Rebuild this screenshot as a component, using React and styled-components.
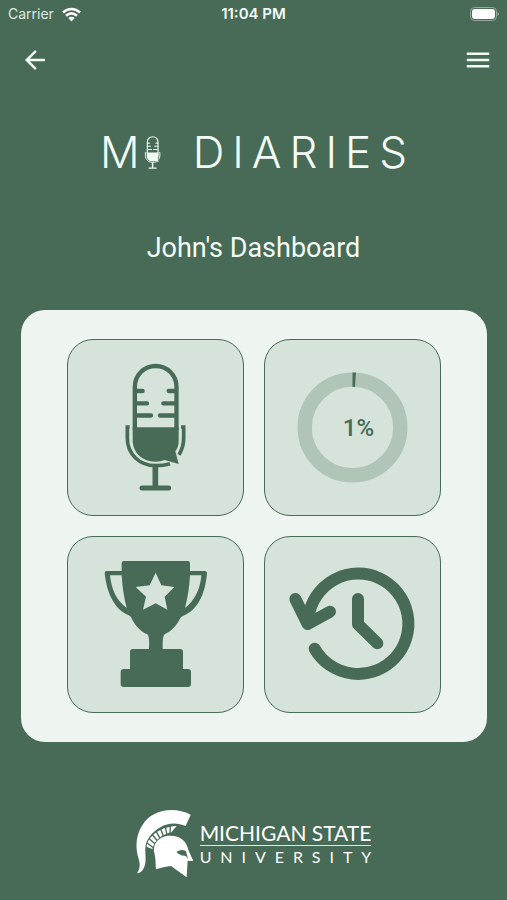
import React from 'react';
import styled, { createGlobalStyle } from 'styled-components';
import { MdArrowBack, MdMenu } from 'react-icons/md';

const GlobalStyle = createGlobalStyle`
  * {
    box-sizing: border-box;
  }
  body {
    margin: 0;
    background: #476b56;
  }
`;

const Page = styled.div`
  min-height: 100vh;
  display: flex;
  flex-direction: column;
  background: #476b56;
  color: #f3fbf6;
  font-family: Roboto, sans-serif;
`;

const StatusBar = styled.div`
  display: grid;
  grid-template-columns: 1fr auto 1fr;
  align-items: center;
  height: 28px;
  padding: 0 8px;
  font-family: Inter, sans-serif;
  font-size: 14px;
  line-height: 20px;
`;

const Carrier = styled.span`
  display: flex;
  align-items: center;
  gap: 8px;
  color: #dfe9e3;
`;

const Clock = styled.time`
  font-size: 15px;
  font-weight: 600;
`;

const Battery = styled.svg`
  justify-self: end;
`;

const NavBar = styled.nav`
  display: flex;
  justify-content: space-between;
  align-items: center;
  height: 64px;
  padding: 0 14px 0 20px;
`;

const IconButton = styled.button`
  display: flex;
  padding: 0;
  border: 0;
  background: none;
  color: inherit;
  font-size: 30px;
  cursor: pointer;
`;

const Brand = styled.h1`
  display: flex;
  justify-content: center;
  align-items: center;
  gap: 4px;
  margin: 32px 0 0;
  font-family: Inter, sans-serif;
  font-size: 44px;
  line-height: 56px;
  font-weight: 300;
`;

/* the negative margin drops the tracking after the last letter */
const BrandWord = styled.span`
  margin-right: -8px;
  padding-left: 28px;
  letter-spacing: 8px;
`;

const Subtitle = styled.h2`
  margin: 53px 0 0;
  text-align: center;
  font-size: 27px;
  line-height: 30px;
  font-weight: 400;
`;

const Panel = styled.main`
  display: grid;
  grid-template-columns: 1fr 1fr;
  gap: 20px;
  margin: 47px 20px 0 21px;
  padding: 29px 46px;
  border-radius: 24px;
  background: #eef4f0;
`;

const Tile = styled.button`
  display: grid;
  place-items: center;
  aspect-ratio: 1;
  padding: 0;
  border: 1px solid #476b56;
  border-radius: 26px;
  background: #d5e3da;
  color: #476b56;
  cursor: pointer;

  svg {
    grid-area: 1 / 1;
    display: block;
    width: 100%;
  }
`;

const Percent = styled.span`
  grid-area: 1 / 1;
  padding-left: 12px;
  font-family: Roboto, sans-serif;
  font-size: 24px;
  line-height: 28px;
  font-weight: 500;
`;

const Footer = styled.footer`
  display: flex;
  justify-content: center;
  align-items: center;
  gap: 6px;
  margin-top: 67px;
  padding-bottom: 20px;
  color: #fff;
  font-family: Lato, sans-serif;
`;

const School = styled.div`
  display: flex;
  flex-direction: column;
`;

const SchoolName = styled.span`
  border-bottom: 1px solid #dfe9e3;
  font-size: 21px;
  line-height: 25px;
`;

const SchoolKind = styled.span`
  display: flex;
  justify-content: space-between;
  padding-top: 1px;
  font-size: 16px;
  line-height: 20px;
`;

function MicShape() {
  return (
    <g fill="none" stroke="currentColor" strokeWidth="13" strokeLinecap="round">
      <path d="M224.500 300V170a62.500 62 0 0 1 125 0v130" strokeLinecap="butt" />
      <path d="M230 183h18M230 220h31M230 256.500h43M345 183h-19M345 220h-35M345 256.500h-45" />
      <path
        d="M218 292h138v42q0 17-10 30l10 38-42-12q-12 5-27 5c-42 0-69-29-69-65z"
        fill="currentColor"
        stroke="none"
      />
      <path d="M209 291h-7v34c0 48 37 82 85 82q24 0 43-6" strokeWidth="11" strokeLinecap="butt" />
      <path d="M363 291h8v34q0 27-14 49" strokeWidth="11" strokeLinecap="butt" />
      <path d="M286 406v65" strokeWidth="17" strokeLinecap="butt" />
      <path d="M246 474h80" strokeWidth="15" />
    </g>
  );
}

function ProgressRing({ value }) {
  const r = 143.5;
  const length = 2 * Math.PI * r;
  return (
    <svg viewBox="27 30 525 525" aria-hidden="true">
      <g fill="none" strokeWidth="43" transform="rotate(-90 289.500 292.500)">
        <circle cx="289.500" cy="292.500" r={r} stroke="#b0c4b8" />
        <circle
          cx="289.500"
          cy="292.500"
          r={r}
          stroke="#476b56"
          strokeDasharray={`${(length * value) / 100} ${length}`}
        />
      </g>
    </svg>
  );
}

function Trophy() {
  return (
    <svg viewBox="24 21 525 525" aria-hidden="true">
      <path
        fill="currentColor"
        fillRule="evenodd"
        d="M191 93h192q7 0 7 7v23h45q6 0 6 7c-5 59-27 111-71 127q-6 2-9 7c-12 24-28 40-47 49q-7 4-6 44h53q8 0 8 8v52h15q9 0 9 9v36q0 9-9 9H191q-9 0-9-9v-36q0-9 9-9h19v-52q0-8 8-8h49q2-40-5-44c-20-9-36-25-48-50q-2-5-8-7c-43-17-66-68-72-126q0-7 6-7h45v-23q0-7 6-7zM150 136c4 42 20 77 50 98q-12-45-15-98zM390 136q-3 53-15 98c29-22 46-56 49-98zM287 128l-18 38-42 5 31 29-9 39 38-19 35 19-8-39 29-29-39-5z"
      />
    </svg>
  );
}

function History() {
  return (
    <svg viewBox="27 21 525 525" aria-hidden="true">
      <g
        fill="none"
        stroke="currentColor"
        strokeWidth="36"
        strokeLinecap="round"
        strokeLinejoin="round"
      >
        <path d="M157.500 261A150.500 150.500 0 1 1 176 356" />
        <path d="M118 207l37 75 67-37M306 207v76l58 57" />
      </g>
    </svg>
  );
}

function Helmet() {
  return (
    <svg width="58" height="69" viewBox="30 28 174 207" aria-hidden="true">
      <path d="M61 141C66 112 98 82 152 79L136 98C112 103 88 118 79 148z" fill="#fff" />
      <path
        d="M60 128l26 19M67 115l24 21M77 103l20 24M89 93l15 26M103 86l10 25M118 81l5 26M133 78l-1 24"
        fill="none"
        stroke="#476b56"
        strokeWidth="4"
      />
      <g fill="#fff" stroke="#476b56" strokeWidth="4" paintOrder="stroke">
        <path d="M194 45l-15 34c-24-10-52-11-76 4-26 15-43 37-45 61-1 27 5 45-6 64-5 8-10 12-19 13 9-13 10-28 5-43-11-35-9-72 12-103C74 33 141 17 194 45z" />
        <path d="M90 209c-2-18 0-31-5-49-7-29 17-53 49-52 29 0 49 17 53 43l15 33-17-1-3 50-47-34c-14 1-31 6-45 10z" />
      </g>
      <path d="M151 157q16-11 29-2l6 22q-6-11-16-9-11-2-19-11z" fill="#476b56" />
    </svg>
  );
}

export default function App() {
  return (
    <Page>
      <GlobalStyle />
      <StatusBar>
        <Carrier>
          Carrier
          <svg width="19" height="15" viewBox="0 0 19 15" aria-hidden="true">
            <g fill="none" stroke="#fff" strokeWidth="2.500">
              <path d="M1 5.500c5-4.700 12-4.700 17 0" />
              <path d="M4 8.700c3.500-3 7.500-3 11 0" />
            </g>
            <path d="M6.300 11q3.200-2.400 6.400 0L9.500 14.500z" fill="#fff" />
          </svg>
        </Carrier>
        <Clock>11:04 PM</Clock>
        <Battery width="30" height="14" viewBox="0 0 30 14" aria-hidden="true">
          <rect x="1.500" y=".5" width="26" height="13" rx="4" fill="none" stroke="#93a99b" />
          <rect x="3" y="2" width="23" height="10" rx="3" fill="#fff" />
          <path d="M28.500 5v4q3-2 0-4" fill="#93a99b" />
        </Battery>
      </StatusBar>

      <NavBar>
        <IconButton aria-label="Back">
          <MdArrowBack />
        </IconButton>
        <IconButton aria-label="Menu">
          <MdMenu />
        </IconButton>
      </NavBar>

      <Brand>
        <span>M</span>
        <svg width="17" height="33" viewBox="190 100 190 384" aria-hidden="true">
          <MicShape />
        </svg>
        <BrandWord>DIARIES</BrandWord>
      </Brand>
      <Subtitle>John's Dashboard</Subtitle>

      <Panel>
        <Tile aria-label="Record a diary">
          <svg viewBox="24 30 525 525" aria-hidden="true">
            <MicShape />
          </svg>
        </Tile>
        <Tile>
          <ProgressRing value={1} />
          <Percent>1%</Percent>
        </Tile>
        <Tile aria-label="Rewards">
          <Trophy />
        </Tile>
        <Tile aria-label="History">
          <History />
        </Tile>
      </Panel>

      <Footer>
        <Helmet />
        <School>
          <SchoolName>MICHIGAN STATE</SchoolName>
          <SchoolKind>
            {'UNIVERSITY'.split('').map((letter, i) => (
              <span key={i}>{letter}</span>
            ))}
          </SchoolKind>
        </School>
      </Footer>
    </Page>
  );
}
